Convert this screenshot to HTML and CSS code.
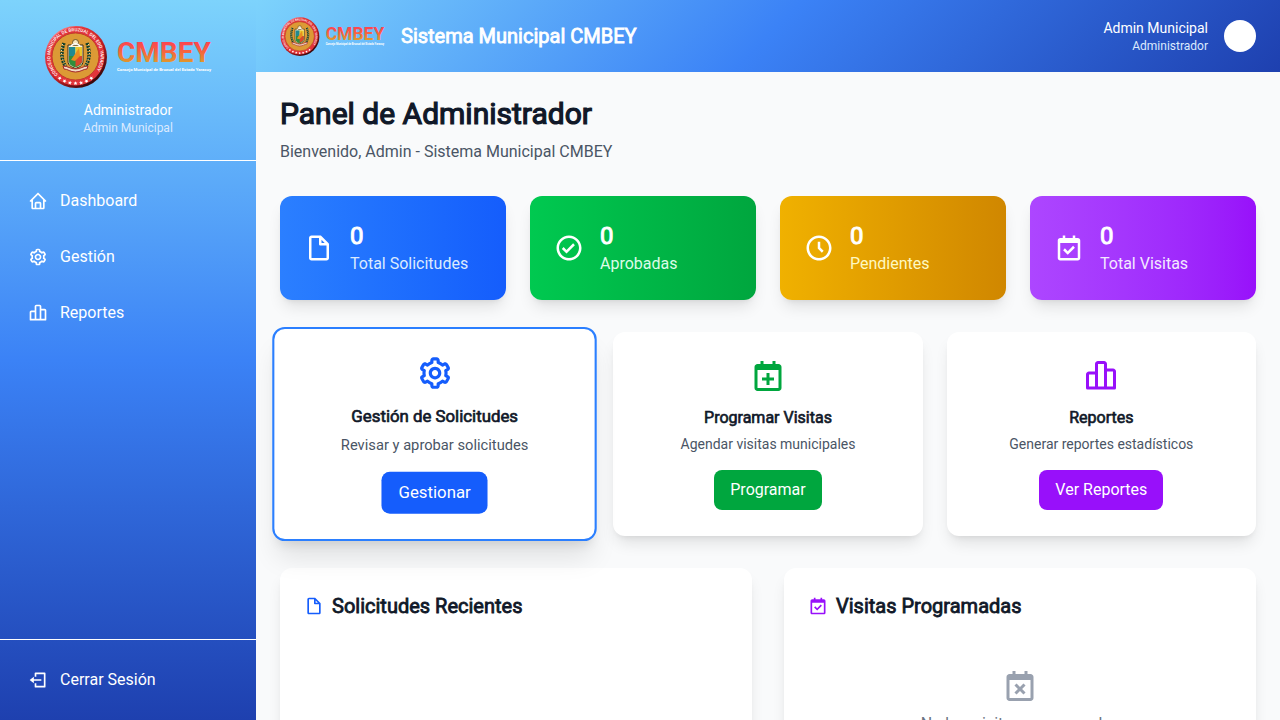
FILE: index.html
```html
<!DOCTYPE html>
<html lang="es">
<head>
<meta charset="utf-8">
<meta name="viewport" content="width=device-width, initial-scale=1">
<title>Sistema Municipal CMBEY</title>
<link rel="stylesheet" href="styles.css">
</head>
<body>
<svg class="sprite" aria-hidden="true">
  <defs>
    <linearGradient id="word" x1="0" y1="0" x2="0" y2="1">
      <stop offset=".2" stop-color="#fb4650"/>
      <stop offset=".45" stop-color="#f8603f"/>
      <stop offset=".8" stop-color="#e0982c"/>
    </linearGradient>
    <linearGradient id="ring" x1=".15" y1=".05" x2=".85" y2=".95">
      <stop offset="0" stop-color="#ff9a9e"/>
      <stop offset=".2" stop-color="#e63a40"/>
      <stop offset=".6" stop-color="#b81c22"/>
      <stop offset="1" stop-color="#1f0305"/>
    </linearGradient>
    <path id="arc" d="M14 50.500A25.200 25.200 0 1 1 49 50.500"/>
    <path id="star" d="M31.500 57.300l.6 1.300 1.400.1-1.100 1 .4 1.400-1.300-.8-1.300.8.4-1.400-1.100-1 1.400-.1z"/>
  </defs>
  <symbol id="logo" viewBox="0 0 168 64">
    <circle cx="32" cy="33" r="31" fill="url(#ring)"/>
    <circle cx="31.500" cy="32.500" r="29" fill="#e2343a"/>
    <circle cx="31.500" cy="32.500" r="23.500" fill="#dc9a35" stroke="#c23a2c" stroke-width="1"/>
    <text class="seal-text"><textPath href="#arc">CONCEJO MUNICIPAL DE BRUZUAL DEL EDO. YARACUY</textPath></text>
    <g fill="#fff">
      <use href="#star" transform="rotate(-36 31.500 32.500)"/>
      <use href="#star" transform="rotate(-24 31.500 32.500)"/>
      <use href="#star" transform="rotate(-12 31.500 32.500)"/>
      <use href="#star"/>
      <use href="#star" transform="rotate(12 31.500 32.500)"/>
      <use href="#star" transform="rotate(24 31.500 32.500)"/>
      <use href="#star" transform="rotate(36 31.500 32.500)"/>
    </g>
    <path d="M20 19c-3 8-3 17 2 24M43 19c3 8 3 17-2 24" fill="none" stroke="#123f2a" stroke-width="3.500" stroke-dasharray="2.200 .8"/>
    <path d="M18.500 20c-2 8-1 15 3 21M44.500 20c2 8 1 15-3 21" fill="none" stroke="#f3e9c0" stroke-width="1" stroke-dasharray="1 2"/>
    <path d="M24 21h15v16c0 5-4 6-7.500 7.500C28 43 24 42 24 37z" fill="#fff4d0" stroke="#3c2b14"/>
    <path d="M25 23h6.500v9H25z" fill="#208a91"/>
    <path d="M31.500 23H38v9h-6.500z" fill="#e9c72c"/>
    <path d="M25 32h13v5c0 4-3 5-6.500 6.500C28 42 25 41 25 37z" fill="#2f8e3c"/>
    <path d="M31.500 32H38v6c-2 3-3 3-6.500 5z" fill="#d8482d"/>
    <path d="M27 36l8-12 1 8-5 5z" fill="#e98d20"/>
    <circle cx="31.500" cy="18.500" r="3" fill="#f6e5bf" stroke="#6d5224"/>
    <path d="M27 22c2-3 7-3 9 0" fill="none" stroke="#fff" stroke-width="1.500"/>
    <path d="M19 42c5 0 7 3 12.500 3S39 42 44 42l-1 3c-4 0-6 3-11.500 3S24 45 20 45z" fill="#f4dbc6" stroke="#a3262a"/>
    <text class="logo-word" x="73" y="38" fill="url(#word)">CMBEY</text>
    <text class="logo-tag" x="73" y="47">Consejo Municipal de Bruzual del Estado Yaracuy</text>
  </symbol>
  <symbol id="home" viewBox="0 0 24 24"><path d="M3 13h1v7c0 1.103.897 2 2 2h12c1.103 0 2-.897 2-2v-7h1a1 1 0 0 0 .707-1.707l-9-9a.999.999 0 0 0-1.414 0l-9 9A1 1 0 0 0 3 13zm7 7v-5h4v5h-4zm2-15.586 6 6V15l.001 5H16v-5c0-1.103-.897-2-2-2h-4c-1.103 0-2 .897-2 2v5H6v-9.586l6-6z"/></symbol>
  <symbol id="cog" viewBox="0 0 24 24"><path d="M12 16c2.206 0 4-1.794 4-4s-1.794-4-4-4-4 1.794-4 4 1.794 4 4 4zm0-6c1.084 0 2 .916 2 2s-.916 2-2 2-2-.916-2-2 .916-2 2-2z"/><path d="m2.845 16.136 1 1.730c.531.917 1.809 1.261 2.730.730l.529-.306A8.100 8.100 0 0 0 9 19.402V20c0 1.103.897 2 2 2h2c1.103 0 2-.897 2-2v-.598a8.132 8.132 0 0 0 1.896-1.111l.529.306c.923.530 2.198.188 2.731-.731l.999-1.729a2.001 2.001 0 0 0-.731-2.732l-.505-.292a7.718 7.718 0 0 0 0-2.224l.505-.292a2.002 2.002 0 0 0 .731-2.732l-.999-1.729c-.531-.920-1.808-1.265-2.731-.732l-.529.306A8.100 8.100 0 0 0 15 4.598V4c0-1.103-.897-2-2-2h-2c-1.103 0-2 .897-2 2v.598a8.132 8.132 0 0 0-1.896 1.111l-.529-.306c-.924-.531-2.200-.187-2.731.732l-.999 1.729a2.001 2.001 0 0 0 .731 2.732l.505.292a7.683 7.683 0 0 0 0 2.223l-.505.292a2.003 2.003 0 0 0-.731 2.733zm3.326-2.758A5.703 5.703 0 0 1 6 12c0-.462.058-.926.170-1.378a.999.999 0 0 0-.470-1.108l-1.123-.650.998-1.729 1.145.662a.997.997 0 0 0 1.188-.142 6.071 6.071 0 0 1 2.384-1.399A1 1 0 0 0 11 5.300V4h2v1.300a1 1 0 0 0 .708.956 6.083 6.083 0 0 1 2.384 1.399.999.999 0 0 0 1.188.142l1.144-.661 1 1.729-1.124.649a1 1 0 0 0-.470 1.108c.112.452.170.916.170 1.378 0 .461-.058.925-.171 1.378a1 1 0 0 0 .471 1.108l1.123.649-.998 1.729-1.145-.661a.996.996 0 0 0-1.188.142 6.071 6.071 0 0 1-2.384 1.399A1 1 0 0 0 13 18.700l.002 1.300H11v-1.300a1 1 0 0 0-.708-.956 6.083 6.083 0 0 1-2.384-1.399.992.992 0 0 0-1.188-.141l-1.144.662-1-1.729 1.124-.651a1 1 0 0 0 .471-1.108z"/></symbol>
  <symbol id="chart" viewBox="0 0 24 24"><path d="M20 7h-4V4c0-1.103-.897-2-2-2h-4c-1.103 0-2 .897-2 2v5H4c-1.103 0-2 .897-2 2v9a1 1 0 0 0 1 1h18a1 1 0 0 0 1-1V9c0-1.103-.897-2-2-2zM4 11h4v8H4v-8zm6-1V4h4v15h-4v-9zm10 9h-4V9h4v10z"/></symbol>
  <symbol id="exit" viewBox="0 0 24 24"><path d="m2 12 5 4v-3h9v-2H7V8z"/><path d="M20 3H9a1 1 0 0 0-1 1v4h2V5h9v14h-9v-3H8v4a1 1 0 0 0 1 1h11a1 1 0 0 0 1-1V4a1 1 0 0 0-1-1z"/></symbol>
  <symbol id="file" viewBox="0 0 24 24"><path d="M19.903 8.586a.997.997 0 0 0-.196-.293l-6-6a.997.997 0 0 0-.293-.196c-.030-.014-.062-.022-.094-.033a.991.991 0 0 0-.259-.051C13.040 2.011 13.021 2 13 2H6c-1.103 0-2 .897-2 2v16c0 1.103.897 2 2 2h12c1.103 0 2-.897 2-2V9c0-.021-.011-.040-.013-.062a.952.952 0 0 0-.051-.259c-.010-.032-.019-.063-.033-.093zM16.586 8H14V5.414L16.586 8zM6 20V4h6v5a1 1 0 0 0 1 1h5l.002 10H6z"/></symbol>
  <symbol id="check" viewBox="0 0 24 24"><path d="M12 2C6.486 2 2 6.486 2 12s4.486 10 10 10 10-4.486 10-10S17.514 2 12 2zm0 18c-4.411 0-8-3.589-8-8s3.589-8 8-8 8 3.589 8 8-3.589 8-8 8z"/><path d="M9.999 13.587 7.700 11.292l-1.412 1.416 3.713 3.705 6.706-6.706-1.414-1.414z"/></symbol>
  <symbol id="clock" viewBox="0 0 24 24"><path d="M12 2C6.486 2 2 6.486 2 12s4.486 10 10 10 10-4.486 10-10S17.514 2 12 2zm0 18c-4.411 0-8-3.589-8-8s3.589-8 8-8 8 3.589 8 8-3.589 8-8 8z"/><path d="M13 7h-2v5.414l3.293 3.293 1.414-1.414L13 11.586z"/></symbol>
  <symbol id="cal" viewBox="0 0 24 24"><path d="M19 4h-2V2h-2v2H9V2H7v2H5c-1.103 0-2 .897-2 2v14c0 1.103.897 2 2 2h14c1.103 0 2-.897 2-2V6c0-1.103-.897-2-2-2zm.002 16H5V8h14l.002 12z"/></symbol>
  <symbol id="cal-check" viewBox="0 0 24 24"><use href="#cal"/><path d="m11 17.414 5.707-5.707-1.414-1.414L11 14.586l-2.293-2.293-1.414 1.414z"/></symbol>
  <symbol id="cal-plus" viewBox="0 0 24 24"><use href="#cal"/><path d="M8 13h3v-3h2v3h3v2h-3v3h-2v-3H8z"/></symbol>
  <symbol id="cal-x" viewBox="0 0 24 24"><use href="#cal"/><path d="m9.707 17.707 2.293-2.293 2.293 2.293 1.414-1.414L13.414 14l2.293-2.293-1.414-1.414L12 12.586l-2.293-2.293-1.414 1.414L10.586 14l-2.293 2.293z"/></symbol>
</svg>

<div class="app">
  <aside class="sidebar">
    <div class="brand">
      <svg class="logo logo-large" role="img" aria-label="CMBEY"><use href="#logo"/></svg>
      <div class="brand-role">Administrador</div>
      <div class="brand-user">Admin Municipal</div>
    </div>
    <nav class="nav">
      <a class="nav-item" href="#"><svg class="icon icon-sm"><use href="#home"/></svg><span>Dashboard</span></a>
      <a class="nav-item" href="#"><svg class="icon icon-sm"><use href="#cog"/></svg><span>Gestión</span></a>
      <a class="nav-item" href="#"><svg class="icon icon-sm"><use href="#chart"/></svg><span>Reportes</span></a>
    </nav>
    <div class="session">
      <button class="nav-item" type="button"><svg class="icon icon-sm"><use href="#exit"/></svg><span>Cerrar Sesión</span></button>
    </div>
  </aside>

  <div class="content">
    <header class="topbar">
      <svg class="logo logo-small" role="img" aria-label="CMBEY"><use href="#logo"/></svg>
      <div class="topbar-title strong">Sistema Municipal CMBEY</div>
      <div class="user">
        <div class="user-name">Admin Municipal</div>
        <div class="user-role">Administrador</div>
      </div>
      <div class="avatar"></div>
    </header>

    <main class="main">
      <h1 class="page-title strong">Panel de Administrador</h1>
      <p class="page-subtitle">Bienvenido, Admin - Sistema Municipal CMBEY</p>

      <section class="stats">
        <div class="stat stat-blue">
          <svg class="icon icon-md"><use href="#file"/></svg>
          <div><div class="stat-value strong">0</div><div class="stat-label">Total Solicitudes</div></div>
        </div>
        <div class="stat stat-green">
          <svg class="icon icon-md"><use href="#check"/></svg>
          <div><div class="stat-value strong">0</div><div class="stat-label">Aprobadas</div></div>
        </div>
        <div class="stat stat-yellow">
          <svg class="icon icon-md"><use href="#clock"/></svg>
          <div><div class="stat-value strong">0</div><div class="stat-label">Pendientes</div></div>
        </div>
        <div class="stat stat-purple">
          <svg class="icon icon-md"><use href="#cal-check"/></svg>
          <div><div class="stat-value strong">0</div><div class="stat-label">Total Visitas</div></div>
        </div>
      </section>

      <section class="actions">
        <article class="action action-blue action-active">
          <svg class="icon icon-lg"><use href="#cog"/></svg>
          <h3 class="action-title strong">Gestión de Solicitudes</h3>
          <p class="action-text">Revisar y aprobar solicitudes</p>
          <button class="action-button" type="button">Gestionar</button>
        </article>
        <article class="action action-green">
          <svg class="icon icon-lg"><use href="#cal-plus"/></svg>
          <h3 class="action-title strong">Programar Visitas</h3>
          <p class="action-text">Agendar visitas municipales</p>
          <button class="action-button" type="button">Programar</button>
        </article>
        <article class="action action-purple">
          <svg class="icon icon-lg"><use href="#chart"/></svg>
          <h3 class="action-title strong">Reportes</h3>
          <p class="action-text">Generar reportes estadísticos</p>
          <button class="action-button" type="button">Ver Reportes</button>
        </article>
      </section>

      <section class="panels">
        <article class="panel">
          <h2 class="panel-title strong"><svg class="icon icon-sm tone-blue"><use href="#file"/></svg><span>Solicitudes Recientes</span></h2>
        </article>
        <article class="panel">
          <h2 class="panel-title strong"><svg class="icon icon-sm tone-purple"><use href="#cal-check"/></svg><span>Visitas Programadas</span></h2>
          <div class="empty">
            <svg class="icon icon-lg tone-gray"><use href="#cal-x"/></svg>
            <p class="empty-text">No hay visitas programadas</p>
          </div>
        </article>
      </section>
    </main>
  </div>
</div>
</body>
</html>
```
FILE: styles.css
```css
* { box-sizing: border-box; margin: 0; padding: 0; }

body {
  font-family: Roboto, "Liberation Sans", sans-serif;
  font-size: 16px;
  line-height: 24px;
  color: #101828;
  background: #f9fafb;
}

button { font: inherit; border: 0; background: none; cursor: pointer; }
a { color: inherit; text-decoration: none; }

/* Headings thicken the regular weight with a thin outline */
.strong { font-weight: 400; -webkit-text-stroke: 0.04em currentColor; }

.sprite { position: absolute; width: 0; height: 0; }
.icon { display: block; flex: none; fill: currentColor; }
.icon-sm { width: 20px; height: 20px; }
.icon-md { width: 30px; height: 30px; }
.icon-lg { width: 36px; height: 36px; }
.tone-blue { color: #155dfc; }
.tone-purple { color: #9810fa; }
.tone-gray { color: #99a1af; }

.logo { display: block; flex: none; overflow: visible; }
.logo-large { width: 168px; height: 64px; margin-bottom: 12px; }
.logo-small { width: 105px; height: 40px; }
.logo-word { font-size: 28px; font-weight: 700; }
.logo-tag { font-size: 4.25px; font-weight: 700; fill: #fff; }
.seal-text { font-size: 4.5px; font-weight: 500; fill: #fff; }

.app { display: flex; height: 100vh; }

.sidebar {
  display: flex;
  flex-direction: column;
  flex: none;
  width: 256px;
  color: #fff;
  background: linear-gradient(to bottom, #7dd3fc, #3b82f6, #1e40af);
}
.brand {
  display: flex;
  flex-direction: column;
  align-items: center;
  padding: 24px;
  border-bottom: 1px solid #fff;
}
.brand-role { font-size: 14px; line-height: 20px; }
.brand-user { font-size: 12px; line-height: 16px; color: #dbeafe; }
.nav {
  display: flex;
  flex-direction: column;
  flex: 1;
  gap: 8px;
  padding: 16px;
}
.nav-item {
  display: flex;
  align-items: center;
  gap: 12px;
  width: 100%;
  padding: 12px;
  color: #fff;
}
.session { padding: 16px; border-top: 1px solid #fff; }

.content { display: flex; flex-direction: column; flex: 1; min-width: 0; }
.topbar {
  display: flex;
  align-items: center;
  gap: 16px;
  padding: 16px 24px;
  color: #fff;
  background: linear-gradient(135deg, #7dd3fc, #3b82f6, #1e40af);
}
.topbar-title { flex: 1; font-size: 20px; line-height: 28px; }
.user { text-align: right; }
.user-name { font-size: 14px; line-height: 20px; }
.user-role { font-size: 12px; line-height: 16px; color: #dbeafe; }
.avatar { width: 32px; height: 32px; border-radius: 50%; background: #fff; }

.main { flex: 1; min-height: 0; padding: 24px; overflow-y: auto; scrollbar-width: none; }
.page-title { margin-bottom: 8px; font-size: 30px; line-height: 36px; }
.page-subtitle { margin-bottom: 32px; color: #4a5565; }

.stats { display: grid; grid-template-columns: repeat(4, 1fr); gap: 24px; margin-bottom: 32px; }
.stat {
  display: flex;
  align-items: center;
  gap: 16px;
  padding: 24px;
  border-radius: 12px;
  color: #fff;
  box-shadow: 0 10px 15px -3px rgb(0 0 0 / 0.1), 0 4px 6px -4px rgb(0 0 0 / 0.1);
}
.stat-value { font-size: 24px; line-height: 32px; }
.stat-blue { background: linear-gradient(to right in oklab, #2b7fff, #155dfc); }
.stat-green { background: linear-gradient(to right in oklab, #00c950, #00a63e); }
.stat-yellow { background: linear-gradient(to right in oklab, #f0b100, #d08700); }
.stat-purple { background: linear-gradient(to right in oklab, #ad46ff, #9810fa); }
.stat-blue .stat-label { color: #dbeafe; }
.stat-green .stat-label { color: #dcfce7; }
.stat-yellow .stat-label { color: #fef9c2; }
.stat-purple .stat-label { color: #f3e8ff; }

.actions { display: grid; grid-template-columns: repeat(3, 1fr); gap: 24px; margin-bottom: 32px; }
.action {
  display: flex;
  flex-direction: column;
  align-items: center;
  padding: 24px;
  border: 2px solid transparent;
  border-radius: 12px;
  background: #fff;
  text-align: center;
  box-shadow: 0 10px 15px -3px rgb(0 0 0 / 0.1), 0 4px 6px -4px rgb(0 0 0 / 0.1);
}
.action-active {
  border-color: #2b7fff;
  transform: scale(1.05);
  box-shadow: 0 20px 25px -5px rgb(0 0 0 / 0.1), 0 8px 10px -6px rgb(0 0 0 / 0.1);
}
.action-title { margin: 12px 0 4px; font-size: 16px; line-height: 24px; }
.action-text { margin-bottom: 16px; font-size: 14px; line-height: 20px; color: #4a5565; }
.action-button { padding: 8px 16px; border-radius: 8px; color: #fff; }
.action-blue .icon { color: #155dfc; }
.action-green .icon { color: #00a63e; }
.action-purple .icon { color: #9810fa; }
.action-blue .action-button { background: #155dfc; }
.action-green .action-button { background: #00a63e; }
.action-purple .action-button { background: #9810fa; }

.panels { display: grid; grid-template-columns: repeat(2, 1fr); gap: 32px; }
.panel {
  padding: 24px;
  border-radius: 12px;
  background: #fff;
  box-shadow: 0 10px 15px -3px rgb(0 0 0 / 0.1), 0 4px 6px -4px rgb(0 0 0 / 0.1);
}
.panel-title {
  display: flex;
  align-items: center;
  gap: 8px;
  margin-bottom: 16px;
  font-size: 20px;
  line-height: 28px;
}
.empty { display: flex; flex-direction: column; align-items: center; gap: 8px; padding: 32px 0; }
.empty-text { color: #6a7282; }
```
